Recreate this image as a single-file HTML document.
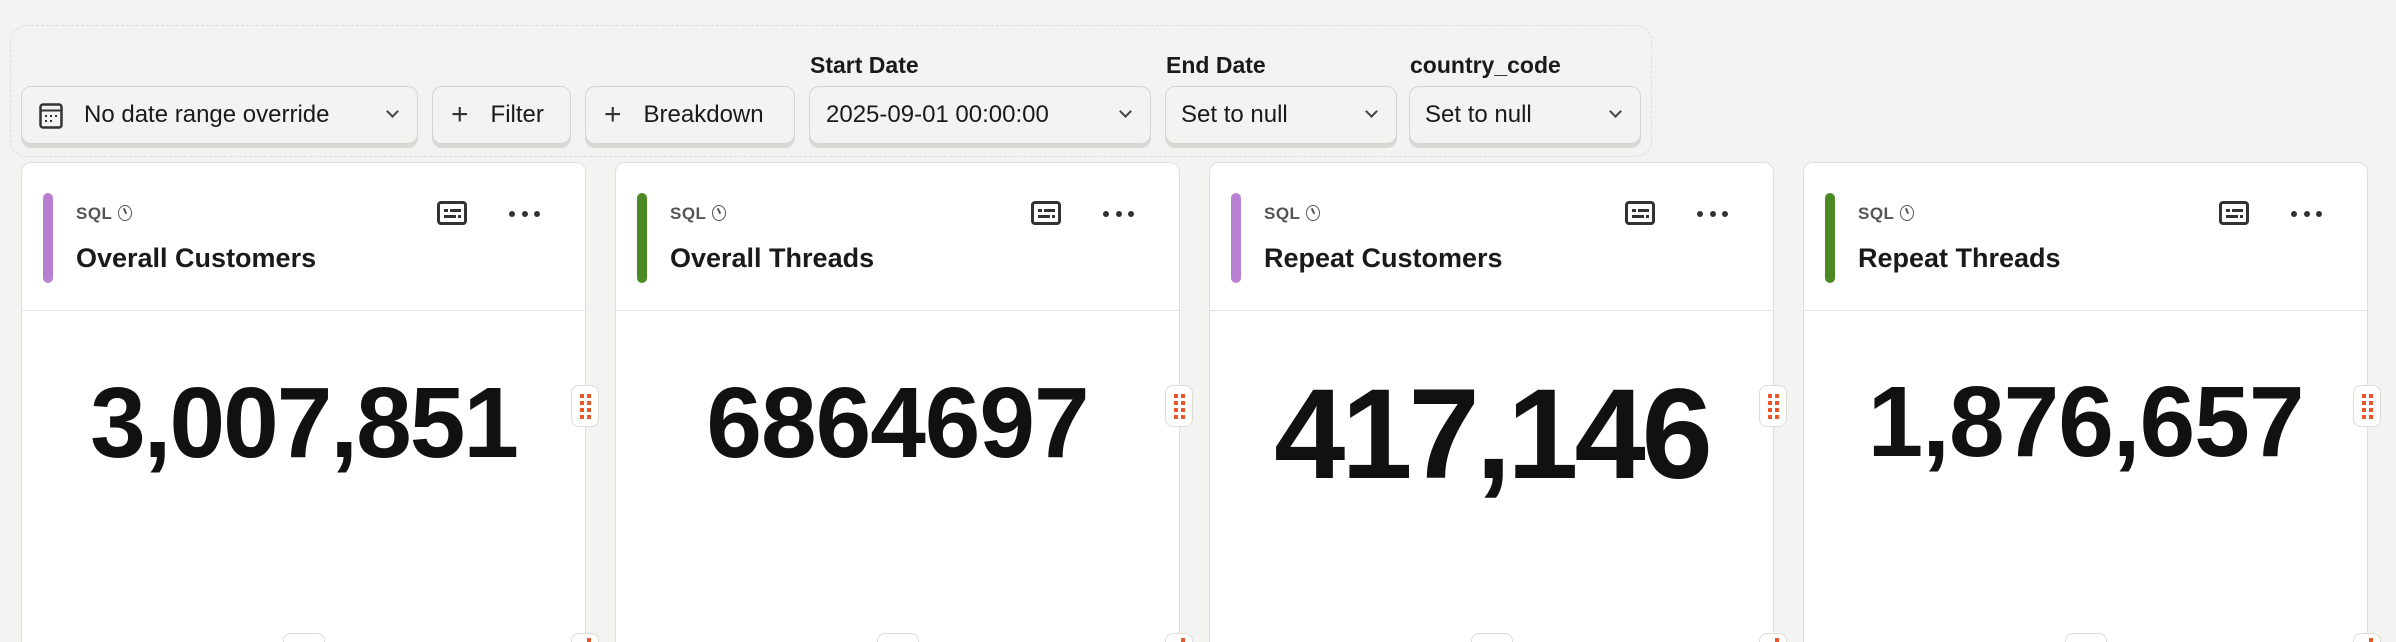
<!DOCTYPE html>
<html><head><meta charset="utf-8"><style>
*{margin:0;padding:0;box-sizing:border-box}
html,body{width:2396px;height:642px;overflow:hidden}
body{background:#f3f3f1;font-family:"Liberation Sans",sans-serif;position:relative;color:#1a1a1a}
.wrap{position:absolute;left:10px;top:25px;width:1642px;height:132px;border:1.5px dashed #dcdcd8;border-radius:16px}
.btn{position:absolute;top:86px;height:58px;background:#f3f3f1;border:1.5px solid #d6d5d0;border-radius:10px;box-shadow:0 4px 0 #dad9d5;font-size:24px;display:flex;align-items:center;color:#1a1a1a}
.lbl{position:absolute;top:52px;font-size:23px;font-weight:bold;color:#1a1a1a}
.chev{position:absolute;right:20px;top:20px;width:9px;height:9px;border-right:2px solid #444;border-bottom:2px solid #444;transform:rotate(45deg)}
.plus{font-size:30px;font-weight:normal;margin-right:22px;color:#333}
.card{position:absolute;top:162px;width:565px;height:480px;background:#fff;border:1.5px solid #e0dfda;border-bottom:none;border-radius:10px 10px 0 0}
.card .div{position:absolute;left:0;right:0;top:147px;border-top:1.5px solid #e3e2dc}
.bar{position:absolute;left:21px;top:30px;width:10px;height:90px;border-radius:5px}
.sql{position:absolute;left:54px;top:41px;font-size:17px;font-weight:bold;color:#555;letter-spacing:.5px}
.clk{display:inline-block;width:14px;height:16px;border:1.6px solid #555;border-radius:50%;vertical-align:-2px;margin-left:6px;position:relative}
.clk:after{content:"";position:absolute;left:5px;top:2px;width:2px;height:6px;background:#555;transform:rotate(-25deg)}
.title{position:absolute;left:54px;top:80px;font-size:27px;font-weight:bold;color:#1a1a1a}
.ico{position:absolute;left:415px;top:38px;width:30px;height:24px;border:3px solid #333;border-radius:4px}
.ico i{position:absolute;height:3px;background:#333}
.dots{position:absolute;left:487px;top:48px}
.dots b{position:absolute;width:6px;height:6px;border-radius:50%;background:#333}
.num{position:absolute;left:0;right:0;text-align:center;font-weight:bold;color:#111}
.hdl{position:absolute;width:28px;height:42px;background:#fff;border:1.5px solid #dedcd6;border-radius:8px}
.hdl i{position:absolute;width:4px;height:4px;background:#e8562a}
.hb{position:absolute;top:633px;width:42px;height:9px;background:#fff;border:1.5px solid #dedcd6;border-bottom:none;border-radius:8px 8px 0 0}
.hdl.s{height:9px;border-bottom:none;border-radius:8px 8px 0 0}
</style></head><body>
<div class="wrap"></div>
<div class="lbl" style="left:810px">Start Date</div>
<div class="lbl" style="left:1166px">End Date</div>
<div class="lbl" style="left:1410px">country_code</div>

<div class="btn" style="left:21px;width:397px">
<svg style="position:absolute;left:17px;top:16px" width="24" height="26" viewBox="0 0 24 26"><rect x="1.5" y="1.5" width="21" height="23" rx="2.5" fill="none" stroke="#333" stroke-width="2.5"/><line x1="1.5" y1="7.5" x2="22.5" y2="7.5" stroke="#333" stroke-width="2"/><g fill="#333"><rect x="6" y="12" width="2" height="2"/><rect x="11" y="12" width="2" height="2"/><rect x="16" y="12" width="2" height="2"/><rect x="6" y="17" width="2" height="2"/><rect x="11" y="17" width="2" height="2"/></g></svg>
<span style="position:absolute;left:62px">No date range override</span><div class="chev"></div></div>
<div class="btn" style="left:432px;width:139px;padding-left:18px"><span class="plus">+</span>Filter</div>
<div class="btn" style="left:585px;width:210px;padding-left:18px"><span class="plus">+</span>Breakdown</div>
<div class="btn" style="left:809px;width:342px;padding-left:16px">2025-09-01 00:00:00<div class="chev"></div></div>
<div class="btn" style="left:1165px;width:232px;padding-left:15px">Set to null<div class="chev"></div></div>
<div class="btn" style="left:1409px;width:232px;padding-left:15px">Set to null<div class="chev"></div></div>

<div class="card" style="left:21px"><div class="bar" style="background:#b97fd0"></div><div class="sql">SQL<span class="clk"></span></div><div class="title">Overall Customers</div><div class="ico"><i style="left:4px;top:5px;width:4px"></i><i style="left:10px;top:5px;width:11px"></i><i style="left:4px;top:11px;width:12px"></i><i style="left:18px;top:11px;width:3px"></i></div><div class="dots"><b style="left:0"></b><b style="left:13px"></b><b style="left:25px"></b></div><div class="div"></div><div class="num" style="top:203px;font-size:100px;letter-spacing:-2px">3,007,851</div></div>
<div class="card" style="left:615px"><div class="bar" style="background:#4b8a23"></div><div class="sql">SQL<span class="clk"></span></div><div class="title">Overall Threads</div><div class="ico"><i style="left:4px;top:5px;width:4px"></i><i style="left:10px;top:5px;width:11px"></i><i style="left:4px;top:11px;width:12px"></i><i style="left:18px;top:11px;width:3px"></i></div><div class="dots"><b style="left:0"></b><b style="left:13px"></b><b style="left:25px"></b></div><div class="div"></div><div class="num" style="top:203px;font-size:100px;letter-spacing:-1px">6864697</div></div>
<div class="card" style="left:1209px"><div class="bar" style="background:#b97fd0"></div><div class="sql">SQL<span class="clk"></span></div><div class="title">Repeat Customers</div><div class="ico"><i style="left:4px;top:5px;width:4px"></i><i style="left:10px;top:5px;width:11px"></i><i style="left:4px;top:11px;width:12px"></i><i style="left:18px;top:11px;width:3px"></i></div><div class="dots"><b style="left:0"></b><b style="left:13px"></b><b style="left:25px"></b></div><div class="div"></div><div class="num" style="top:198px;font-size:128px;letter-spacing:-4px">417,146</div></div>
<div class="card" style="left:1803px"><div class="bar" style="background:#4b8a23"></div><div class="sql">SQL<span class="clk"></span></div><div class="title">Repeat Threads</div><div class="ico"><i style="left:4px;top:5px;width:4px"></i><i style="left:10px;top:5px;width:11px"></i><i style="left:4px;top:11px;width:12px"></i><i style="left:18px;top:11px;width:3px"></i></div><div class="dots"><b style="left:0"></b><b style="left:13px"></b><b style="left:25px"></b></div><div class="div"></div><div class="num" style="top:202px;font-size:100px;letter-spacing:-1px">1,876,657</div></div>

<div class="hdl" style="left:571px;top:385px"><i style="left:8px;top:8px"></i><i style="left:15px;top:8px"></i><i style="left:8px;top:15px"></i><i style="left:15px;top:15px"></i><i style="left:8px;top:22px"></i><i style="left:15px;top:22px"></i><i style="left:8px;top:29px"></i><i style="left:15px;top:29px"></i></div>
<div class="hdl" style="left:1165px;top:385px"><i style="left:8px;top:8px"></i><i style="left:15px;top:8px"></i><i style="left:8px;top:15px"></i><i style="left:15px;top:15px"></i><i style="left:8px;top:22px"></i><i style="left:15px;top:22px"></i><i style="left:8px;top:29px"></i><i style="left:15px;top:29px"></i></div>
<div class="hdl" style="left:1759px;top:385px"><i style="left:8px;top:8px"></i><i style="left:15px;top:8px"></i><i style="left:8px;top:15px"></i><i style="left:15px;top:15px"></i><i style="left:8px;top:22px"></i><i style="left:15px;top:22px"></i><i style="left:8px;top:29px"></i><i style="left:15px;top:29px"></i></div>
<div class="hdl" style="left:2353px;top:385px"><i style="left:8px;top:8px"></i><i style="left:15px;top:8px"></i><i style="left:8px;top:15px"></i><i style="left:15px;top:15px"></i><i style="left:8px;top:22px"></i><i style="left:15px;top:22px"></i><i style="left:8px;top:29px"></i><i style="left:15px;top:29px"></i></div>
<div class="hb" style="left:283px"></div><div class="hb" style="left:877px"></div><div class="hb" style="left:1471px"></div><div class="hb" style="left:2065px"></div>
<div class="hdl s" style="left:571px;top:633px"><i style="left:15px;top:4px"></i></div>
<div class="hdl s" style="left:1165px;top:633px"><i style="left:15px;top:4px"></i></div>
<div class="hdl s" style="left:1759px;top:633px"><i style="left:15px;top:4px"></i></div>
<div class="hdl s" style="left:2353px;top:633px"><i style="left:15px;top:4px"></i></div>
</body></html>
